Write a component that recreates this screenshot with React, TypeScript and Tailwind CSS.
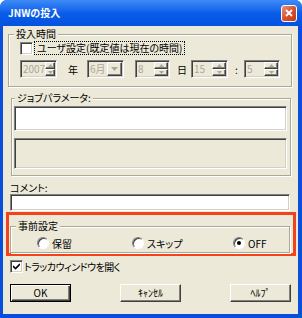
import React from "react";

const sunken =
  "border border-t-[#808080] border-l-[#808080] border-b-white border-r-white shadow-[inset_1px_1px_0_#404040,inset_-1px_-1px_0_#D4D0C8]";
const raised =
  "border border-t-white border-l-white border-b-[#404040] border-r-[#404040] shadow-[inset_-1px_-1px_0_#808080]";
const etched =
  "border border-[#ACA899] shadow-[inset_1px_1px_0_#fff,1px_1px_0_#fff]";

const Spin = ({ value, className }: { value: string; className: string }) => (
  <div className={`flex h-[18px] bg-[#ECE9D8] ${sunken} ${className}`}>
    <span className="flex-1 pl-[2px] text-[#ACA899] leading-[16px]">{value}</span>
    <div className="flex flex-col w-[15px] py-px pr-px">
      <div className={`flex-1 flex items-center justify-center bg-[#ECE9D8] ${raised}`}>
        <svg width="5" height="3" viewBox="0 0 5 3"><path d="M2.5 0 L5 3 L0 3 Z" fill="#ACA899" /></svg>
      </div>
      <div className={`flex-1 flex items-center justify-center bg-[#ECE9D8] ${raised}`}>
        <svg width="5" height="3" viewBox="0 0 5 3"><path d="M0 0 L5 0 L2.5 3 Z" fill="#ACA899" /></svg>
      </div>
    </div>
  </div>
);

const Combo = ({ value, className }: { value: string; className: string }) => (
  <div className={`flex h-[18px] bg-[#ECE9D8] ${sunken} ${className}`}>
    <span className="flex-1 pl-[2px] text-[#ACA899] leading-[16px]">{value}</span>
    <div className={`w-[15px] my-px mr-px flex items-center justify-center bg-[#ECE9D8] ${raised}`}>
      <svg width="7" height="4" viewBox="0 0 7 4"><path d="M0 0 L7 0 L3.5 4 Z" fill="#ACA899" /></svg>
    </div>
  </div>
);

const Check = ({ checked }: { checked?: boolean }) => (
  <div className={`w-[13px] h-[13px] shrink-0 bg-white flex items-center justify-center ${sunken}`}>
    {checked && (
      <svg width="7" height="7" viewBox="0 0 7 7">
        <path d="M0 3 L2.5 5.5 L7 1" stroke="#000" strokeWidth="1.6" fill="none" />
      </svg>
    )}
  </div>
);

const Radio = ({ checked }: { checked?: boolean }) => (
  <div className="w-[12px] h-[12px] rounded-full bg-white flex items-center justify-center border border-t-[#808080] border-l-[#808080] border-b-white border-r-white shadow-[inset_1px_1px_0_#404040]">
    {checked && <div className="w-[4px] h-[4px] rounded-full bg-black" />}
  </div>
);

const Btn = ({ label, primary, className }: { label: string; primary?: boolean; className: string }) => (
  <button
    className={`h-[18px] w-[61px] bg-[#ECE9D8] text-black leading-none ${
      primary
        ? "border border-black shadow-[inset_1px_1px_0_#fff,inset_-1px_-1px_0_#404040,inset_-2px_-2px_0_#808080]"
        : "border border-t-white border-l-white border-b-[#404040] border-r-[#404040] shadow-[inset_-1px_-1px_0_#808080]"
    } ${className}`}
  >
    {label}
  </button>
);

export default function App() {
  return (
    <div className="w-[302px] h-[318px] flex flex-col bg-[#0A4FDB] rounded-t-[7px] overflow-hidden font-['Noto_Sans_CJK_JP',sans-serif] [font-feature-settings:'palt'] text-[10px] text-black">
      <div className="h-[26px] shrink-0 flex items-center justify-between pl-[8px] pr-[5px] bg-linear-to-b from-[#3E8BF6] via-[#0A5DE9] to-[#0352DF]">
        <span className="text-white font-bold text-[10px] leading-none">JNWの投入</span>
        <div className="w-[16px] h-[17px] rounded-[3px] border border-white bg-linear-to-br from-[#E9937A] via-[#D9512F] to-[#C13A17] flex items-center justify-center">
          <svg width="8" height="8" viewBox="0 0 8 8">
            <path d="M1 1 L7 7 M7 1 L1 7" stroke="#fff" strokeWidth="1.8" />
          </svg>
        </div>
      </div>

      <div className="flex-1 ml-[3px] mr-[4px] mb-[4px] bg-[#ECE9D8] flex flex-col">
        <fieldset className={`mt-[2px] ml-[5px] w-[284px] ${etched}`}>
          <legend className="ml-[5px] px-[2px] leading-[12px] bg-[#ECE9D8]">投入時間</legend>
          <div className="pl-[11px] pb-[8px]">
            <div className="mt-px h-[14px] flex items-center">
              <Check />
              <span className="ml-px h-[14px] px-[2px] border border-dotted border-black leading-[12px]">
                ユーザ設定(既定値は現在の時間)
              </span>
            </div>
            <div className="mt-[5px] h-[18px] flex items-center">
              <Spin value="2007" className="w-[37px]" />
              <span className="ml-[11px] w-[19px]">年</span>
              <Combo value="6月" className="w-[37px]" />
              <span className="w-[11px]" />
              <Spin value="8" className="w-[35px]" />
              <span className="ml-[7px] w-[14px]">日</span>
              <Spin value="15" className="w-[37px]" />
              <span className="ml-[7px] w-[9px]">:</span>
              <Spin value="5" className="w-[36px]" />
            </div>
          </div>
        </fieldset>

        <fieldset className={`mt-[5px] ml-[8px] w-[280px] ${etched}`}>
          <legend className="ml-[3px] px-[2px] leading-[12px] bg-[#ECE9D8]">ジョブパラメータ:</legend>
          <div className="pl-[2px] pr-[3px] pt-[2px] pb-[6px] flex flex-col gap-[7px]">
            <div className={`h-[25px] bg-white ${sunken}`} />
            <div className={`h-[31px] bg-[#ECE9D8] ${sunken}`} />
          </div>
        </fieldset>

        <div className="mt-[6px] ml-[7px] leading-[12px]">コメント:</div>
        <div className={`ml-[7px] w-[280px] h-[17px] bg-white ${sunken}`} />

        <div className="mt-px ml-[3px] w-[290px] h-[44px] border-[3px] border-[#F4431B]">
          <fieldset className={`mt-[5px] ml-px w-[280px] h-[33px] ${etched}`}>
            <legend className="ml-[5px] px-[2px] leading-[12px] bg-[#ECE9D8]">事前設定</legend>
            <div className="pl-[26px] mt-[4px] h-[14px] flex items-center">
              <div className="w-[95px] flex items-center gap-[3px]">
                <Radio />
                <span>保留</span>
              </div>
              <div className="w-[101px] flex items-center gap-[3px]">
                <Radio />
                <span>スキップ</span>
              </div>
              <div className="flex items-center gap-[3px]">
                <Radio checked />
                <span>OFF</span>
              </div>
            </div>
          </fieldset>
        </div>

        <div className="mt-[4px] ml-[7px] h-[13px] flex items-center gap-[1px]">
          <Check checked />
          <span className="tracking-[-0.5px]">トラッカウィンドウを開く</span>
        </div>

        <div className="mt-[11px] ml-[7px] flex">
          <Btn label="OK" primary className="" />
          <Btn label="ｷｬﾝｾﾙ" className="ml-[49px]" />
          <Btn label="ﾍﾙﾌﾟ" className="ml-[49px]" />
        </div>
      </div>
    </div>
  );
}
